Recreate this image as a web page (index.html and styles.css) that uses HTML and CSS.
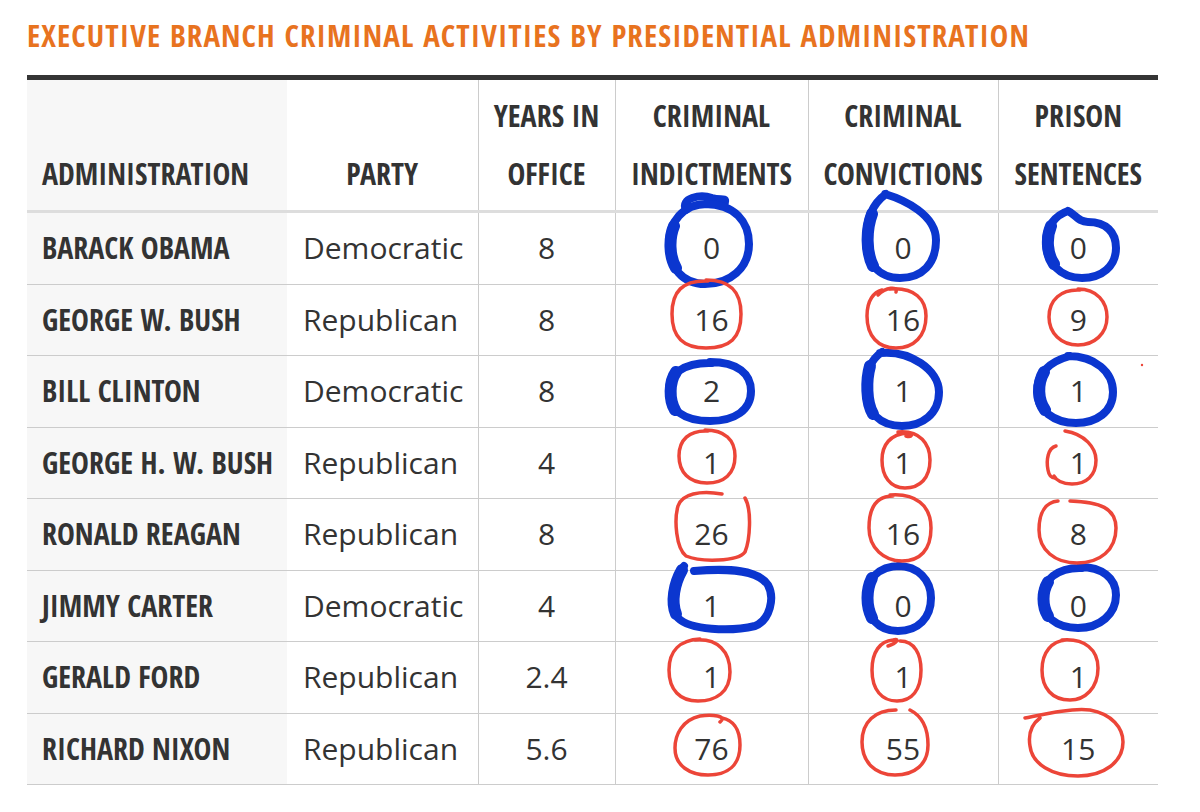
FILE: index.html
```html
<!DOCTYPE html>
<html lang="en">
<head>
<meta charset="utf-8">
<title>Executive Branch Criminal Activities by Presidential Administration</title>
<link rel="stylesheet" href="styles.css">
</head>
<body>
<div class="page">
  <h1 class="title">EXECUTIVE BRANCH CRIMINAL ACTIVITIES BY PRESIDENTIAL ADMINISTRATION</h1>
  <div class="rule"></div>
  <table class="crimes">
    <colgroup>
      <col class="c-admin"><col class="c-party"><col class="c-years"><col class="c-ind"><col class="c-conv"><col class="c-pris">
    </colgroup>
    <thead>
      <tr>
        <th class="admin">ADMINISTRATION</th>
        <th class="party-h">PARTY</th>
        <th class="num">YEARS IN<br>OFFICE</th>
        <th class="num">CRIMINAL<br>INDICTMENTS</th>
        <th class="num">CRIMINAL<br>CONVICTIONS</th>
        <th class="num">PRISON<br>SENTENCES</th>
      </tr>
    </thead>
    <tbody>
      <tr><td class="admin">BARACK OBAMA</td><td class="party">Democratic</td><td class="num">8</td><td class="num">0</td><td class="num">0</td><td class="num">0</td></tr>
      <tr><td class="admin">GEORGE W. BUSH</td><td class="party">Republican</td><td class="num">8</td><td class="num">16</td><td class="num">16</td><td class="num">9</td></tr>
      <tr><td class="admin">BILL CLINTON</td><td class="party">Democratic</td><td class="num">8</td><td class="num">2</td><td class="num">1</td><td class="num">1</td></tr>
      <tr><td class="admin">GEORGE H. W. BUSH</td><td class="party">Republican</td><td class="num">4</td><td class="num">1</td><td class="num">1</td><td class="num">1</td></tr>
      <tr><td class="admin">RONALD REAGAN</td><td class="party">Republican</td><td class="num">8</td><td class="num">26</td><td class="num">16</td><td class="num">8</td></tr>
      <tr><td class="admin">JIMMY CARTER</td><td class="party">Democratic</td><td class="num">4</td><td class="num">1</td><td class="num">0</td><td class="num">0</td></tr>
      <tr><td class="admin">GERALD FORD</td><td class="party">Republican</td><td class="num">2.4</td><td class="num">1</td><td class="num">1</td><td class="num">1</td></tr>
      <tr><td class="admin">RICHARD NIXON</td><td class="party">Republican</td><td class="num">5.6</td><td class="num">76</td><td class="num">55</td><td class="num">15</td></tr>
    </tbody>
  </table>

  <svg class="ink" width="1200" height="812" viewBox="0 0 1200 812" aria-hidden="true">
    <g class="blue">
      <path d="M686,210 C680,198 700,194 712,198 C722,201 728,196 724,205"/>
      <path d="M705,204 C735,204 749,222 749,244 C749,268 730,284 705,284 C683,284 669,268 669,244 C669,222 683,204 707,204"/>
      <path class="thick" d="M674,226 C669,238 669,256 676,268"/>
      <path d="M710,362 C738,362 751,374 751,391 C751,410 735,421 710,421 C684,421 669,410 669,391 C669,374 684,362 712,363"/>
      <path class="thick" d="M676,372 C669,382 669,400 675,410"/>
      <path d="M684,566 C674,580 668,604 678,618 C690,630 730,632 755,626 C770,620 775,598 768,585 C758,570 730,568 694,571"/>
      <path class="thick" d="M682,570 C674,584 671,602 676,614"/>
      <path d="M885,194 C905,200 936,215 936,240 C936,264 922,278 900,278 C878,278 866,262 866,240 C866,220 872,204 886,194"/>
      <path class="thick" d="M872,214 C866,230 866,252 873,266"/>
      <path d="M880,353 C910,350 939,370 939,392 C939,414 922,426 902,426 C880,426 866,412 866,390 C866,372 870,360 882,352"/>
      <path class="thick" d="M870,366 C866,380 866,402 873,414"/>
      <path d="M898,566 C918,566 931,580 931,598 C931,618 918,631 898,631 C878,631 866,616 866,598 C866,580 878,566 900,566"/>
      <path class="thick" d="M872,578 C866,590 866,606 872,618"/>
      <path d="M1068,211 C1075,214 1078,222 1088,222 C1106,222 1116,232 1116,248 C1116,266 1102,278 1082,278 C1060,278 1046,262 1046,242 C1046,226 1056,215 1068,211"/>
      <path class="thick" d="M1051,226 C1046,238 1047,254 1054,264"/>
      <path d="M1068,356 C1095,356 1113,372 1113,392 C1113,412 1096,423 1076,423 C1054,423 1037,410 1037,392 C1037,374 1048,362 1070,356"/>
      <path class="thick" d="M1044,372 C1037,384 1038,400 1045,410"/>
      <path d="M1080,567 C1102,567 1116,578 1116,595 C1116,614 1100,628 1078,628 C1056,628 1042,616 1042,598 C1042,580 1058,567 1082,568"/>
      <path class="thick" d="M1048,582 C1042,592 1042,606 1048,616"/>
    </g>
    <g class="red">
      <path d="M706,280 C731,280 741,292 741,314 C741,338 730,348 706,348 C684,348 672,338 672,314 C672,292 682,280 708,281"/>
      <path d="M705,430 C725,430 735,440 735,456 C735,474 724,483 707,483 C689,483 679,472 679,456 C679,440 689,430 708,431"/>
      <path d="M745,498 C752,510 750,540 745,552 C738,562 700,562 686,556 C676,548 674,520 678,506 C682,494 700,490 722,494"/>
      <path d="M695,640 C718,638 730,652 730,672 C730,692 716,701 698,701 C680,701 669,690 669,670 C669,651 680,640 700,639"/>
      <path d="M720,722 C728,716 712,714 700,716 C682,720 675,735 675,748 C675,766 690,775 708,775 C728,775 740,765 740,745 C740,728 732,720 722,718"/>
      <path d="M878,295 C886,287 898,286 896,292"/>
      <path d="M890,289 C915,287 926,300 926,316 C926,336 914,348 896,348 C878,348 867,336 867,316 C867,300 874,292 882,290"/>
      <path d="M898,432 C920,430 930,444 930,460 C930,478 920,488 905,488 C890,488 882,476 882,460 C882,445 890,434 908,433 C914,433 912,438 906,436"/>
      <path d="M890,495 C915,493 931,505 931,528 C931,550 920,561 902,561 C884,561 869,548 869,528 C869,506 878,496 893,496"/>
      <path d="M900,641 C915,641 921,655 921,670 C921,690 912,701 897,701 C882,701 872,690 872,670 C872,652 880,641 893,640 C900,638 897,643 888,646"/>
      <path d="M910,710 C922,716 928,728 928,745 C928,764 915,775 895,775 C875,775 862,762 862,742 C862,722 875,710 896,710"/>
      <path d="M1078,289 C1097,289 1107,302 1107,317 C1107,334 1094,345 1078,345 C1061,345 1049,333 1049,317 C1049,300 1061,289 1080,290"/>
      <path d="M1065,431 C1085,434 1096,448 1096,460 C1096,476 1086,484 1072,484 C1062,484 1056,480 1054,476"/>
      <path d="M1056,446 C1048,448 1046,460 1048,470 C1049,476 1052,478 1055,478"/>
      <path d="M1070,501 C1100,502 1116,508 1116,528 C1116,550 1100,563 1077,563 C1055,563 1039,550 1039,530 C1039,512 1046,502 1058,501"/>
      <path d="M1062,640 C1085,638 1098,650 1098,668 C1098,688 1085,700 1070,700 C1052,700 1042,688 1042,670 C1042,652 1052,641 1066,640"/>
      <path d="M1025,718 C1045,714 1070,708 1090,710 C1112,714 1123,728 1123,742 C1123,762 1104,776 1078,776 C1052,776 1032,764 1030,746 C1028,734 1032,724 1040,718"/>
      <circle class="dot" cx="1142" cy="365" r="1.2"/>
    </g>
  </svg>
</div>
</body>
</html>
```

FILE: styles.css
```css
html, body {
  margin: 0;
  padding: 0;
  background: #ffffff;
}

.page {
  position: relative;
  width: 1200px;
  height: 812px;
  overflow: hidden;
  box-sizing: border-box;
  padding: 14px 42px 0 27px;
  font-family: "Open Sans", "Liberation Sans", sans-serif;
  color: #333333;
}

.title {
  margin: 0;
  font-family: "Open Sans Condensed", "Open Sans", sans-serif;
  font-stretch: 75%;
  font-weight: 700;
  font-size: 31px;
  letter-spacing: 1.1px;
  line-height: 42px;
  color: #e8731f;
  white-space: nowrap;
}

.rule {
  margin-top: 19px;
  height: 5px;
  width: 1131px;
  background: #353535;
}

.crimes {
  width: 1131px;
  border-collapse: collapse;
  table-layout: fixed;
}

.c-admin { width: 260px; }
.c-party { width: 191px; }
.c-years { width: 137px; }
.c-ind { width: 193px; }
.c-conv { width: 190px; }
.c-pris { width: 160px; }

.crimes th {
  font-family: "Open Sans Condensed", "Open Sans", sans-serif;
  font-stretch: 75%;
  font-weight: 700;
  font-size: 30px;
  line-height: 58px;
  color: #333333;
  vertical-align: bottom;
  padding: 7px 0;
  border-bottom: 3px solid #dddddd;
  white-space: nowrap;
}

.crimes td {
  padding: 0;
  font-size: 30px;
  line-height: 70.5px;
  border-bottom: 1px solid #cccccc;
  white-space: nowrap;
  color: #333333;
}

.crimes .admin {
  text-align: left;
  padding-left: 15px;
  background: #f7f7f7;
}

.crimes td.admin {
  font-family: "Open Sans Condensed", "Open Sans", sans-serif;
  font-stretch: 75%;
  font-weight: 700;
  font-size: 30px;
}

.crimes .party-h {
  text-align: center;
}

.crimes td.party {
  text-align: left;
  padding-left: 16px;
}

.crimes .num {
  text-align: center;
  border-left: 1px solid #cccccc;
}

.ink {
  position: absolute;
  left: 0;
  top: 0;
  pointer-events: none;
}

.ink path {
  fill: none;
  stroke-linecap: round;
  stroke-linejoin: round;
}

.ink .blue path {
  stroke: #0b36cf;
  stroke-width: 8;
}

.ink .blue path.thick {
  stroke-width: 12;
}

.ink .red path {
  stroke: #ec4538;
  stroke-width: 3.5;
}

.ink .dot {
  fill: #ec4538;
}
```
